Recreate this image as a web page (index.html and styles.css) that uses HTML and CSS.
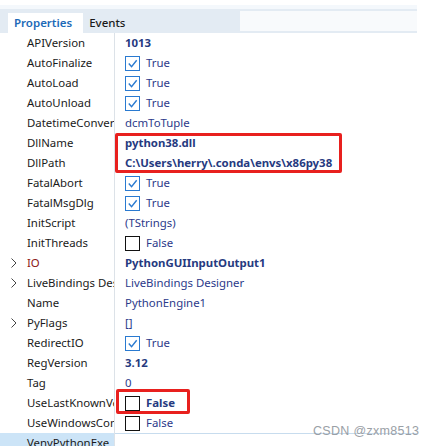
FILE: index.html
```html
<!DOCTYPE html>
<html lang="en">
<head>
    <meta charset="UTF-8">
    <title>Object Inspector</title>
    <link rel="stylesheet" href="styles.css">
</head>
<body>
    <div class="inspector">
        <div class="top-strip"></div>
        <div class="tabbar">
            <div class="tab active">Properties</div>
            <div class="tab">Events</div>
            <div class="search"></div>
        </div>

        <div class="grid">
            <div class="row"><div class="name">APIVersion</div><div class="value bold">1013</div></div>
            <div class="row"><div class="name">AutoFinalize</div><div class="value"><span class="check on"><svg viewBox="0 0 14 14"><polyline points="3,7 6,10.5 11.5,3.5"/></svg></span>True</div></div>
            <div class="row"><div class="name">AutoLoad</div><div class="value"><span class="check on"><svg viewBox="0 0 14 14"><polyline points="3,7 6,10.5 11.5,3.5"/></svg></span>True</div></div>
            <div class="row"><div class="name">AutoUnload</div><div class="value"><span class="check on"><svg viewBox="0 0 14 14"><polyline points="3,7 6,10.5 11.5,3.5"/></svg></span>True</div></div>
            <div class="row"><div class="name">DatetimeConversionMode</div><div class="value">dcmToTuple</div></div>
            <div class="row"><div class="name">DllName</div><div class="value bold">python38.dll</div></div>
            <div class="row"><div class="name">DllPath</div><div class="value bold">C:\Users\herry\.conda\envs\x86py38</div></div>
            <div class="row"><div class="name">FatalAbort</div><div class="value"><span class="check on"><svg viewBox="0 0 14 14"><polyline points="3,7 6,10.5 11.5,3.5"/></svg></span>True</div></div>
            <div class="row"><div class="name">FatalMsgDlg</div><div class="value"><span class="check on"><svg viewBox="0 0 14 14"><polyline points="3,7 6,10.5 11.5,3.5"/></svg></span>True</div></div>
            <div class="row"><div class="name">InitScript</div><div class="value">(TStrings)</div></div>
            <div class="row"><div class="name">InitThreads</div><div class="value"><span class="check"></span>False</div></div>
            <div class="row"><div class="name ref"><svg class="arrow" viewBox="0 0 6 10"><polyline points="0.5,0.5 5,5 0.5,9.5"/></svg>IO</div><div class="value bold">PythonGUIInputOutput1</div></div>
            <div class="row"><div class="name"><svg class="arrow" viewBox="0 0 6 10"><polyline points="0.5,0.5 5,5 0.5,9.5"/></svg>LiveBindings Designer</div><div class="value">LiveBindings Designer</div></div>
            <div class="row"><div class="name">Name</div><div class="value">PythonEngine1</div></div>
            <div class="row"><div class="name"><svg class="arrow" viewBox="0 0 6 10"><polyline points="0.5,0.5 5,5 0.5,9.5"/></svg>PyFlags</div><div class="value">[]</div></div>
            <div class="row"><div class="name">RedirectIO</div><div class="value"><span class="check on"><svg viewBox="0 0 14 14"><polyline points="3,7 6,10.5 11.5,3.5"/></svg></span>True</div></div>
            <div class="row"><div class="name">RegVersion</div><div class="value bold">3.12</div></div>
            <div class="row"><div class="name">Tag</div><div class="value">0</div></div>
            <div class="row"><div class="name">UseLastKnownVersion</div><div class="value bold"><span class="check"></span>False</div></div>
            <div class="row"><div class="name">UseWindowsConsole</div><div class="value"><span class="check"></span>False</div></div>
            <div class="row selected"><div class="name">VenvPythonExe</div><div class="value"></div></div>
        </div>

        <div class="mark mark-dll"></div>
        <div class="mark mark-last"></div>
    </div>
    <div class="watermark">CSDN @zxm8513</div>
</body>
</html>
```

FILE: styles.css
```css
body {
    margin: 0;
    width: 431px;
    height: 446px;
    overflow: hidden;
    background: #ffffff;
    font-family: "Noto Sans", "Open Sans", sans-serif;
    font-size: 11.4px;
    position: relative;
}
.inspector {
    width: 417px;
    padding-top: 5px;
    position: relative;
}
.top-strip {
    height: 4px;
    background: #f4f8fc;
}
.tabbar {
    height: 24px;
    background: #e3ebf3;
    display: flex;
    align-items: flex-end;
    padding-left: 8px;
    position: relative;
    font-size: 11.5px;
}
.tab {
    height: 20px;
    line-height: 19px;
    padding: 0 6px;
    color: #1a1a1a;
    font-weight: 500;
}
.tab.active {
    background: #ffffff;
    color: #1d6ab8;
    font-weight: 600;
    padding: 0 11px 0 6px;
}
.search {
    position: absolute;
    left: 240px;
    right: 0;
    top: 2px;
    height: 20px;
    background: #f8fafc;
}
.grid {
    display: flex;
    flex-direction: column;
}
.row {
    display: flex;
    height: 20px;
    line-height: 20px;
}
.name {
    width: 87px;
    padding-left: 27px;
    color: #1a1a1a;
    white-space: nowrap;
    overflow: hidden;
    text-overflow: clip;
    position: relative;
    border-right: 1px solid #dce2e8;
}
.name.ref {
    color: #8c1515;
}
.arrow {
    position: absolute;
    left: 11px;
    top: 5px;
    width: 6px;
    height: 10px;
    fill: none;
    stroke: #444444;
    stroke-width: 1;
}
.value {
    flex: 1;
    padding-left: 10px;
    color: #2c3a8a;
    white-space: nowrap;
    display: flex;
    align-items: center;
}
.value.bold {
    font-weight: 700;
    color: #263a80;
}
.check {
    width: 13px;
    height: 13px;
    border: 1px solid #111111;
    background: #ffffff;
    margin-right: 6px;
    display: inline-block;
    flex: none;
}
.check.on {
    border-color: #2a7ad0;
}
.check svg {
    width: 13px;
    height: 13px;
    display: block;
    fill: none;
    stroke: #2a7ad0;
    stroke-width: 1.5;
}
.row.selected .name {
    background: #cce4f7;
}
.row.selected .value {
    border-top: 1px solid #c7dcee;
}
.mark {
    position: absolute;
    border: 3px solid #e8201e;
    border-radius: 2px;
}
.mark-dll {
    left: 115px;
    top: 133px;
    width: 221px;
    height: 34px;
}
.mark-last {
    left: 116px;
    top: 389px;
    width: 68px;
    height: 19px;
}
.watermark {
    position: absolute;
    left: 313px;
    top: 424px;
    color: #9aa0a6;
    font-family: "Liberation Sans", sans-serif;
    font-size: 12.5px;
    letter-spacing: 0.3px;
}
```
